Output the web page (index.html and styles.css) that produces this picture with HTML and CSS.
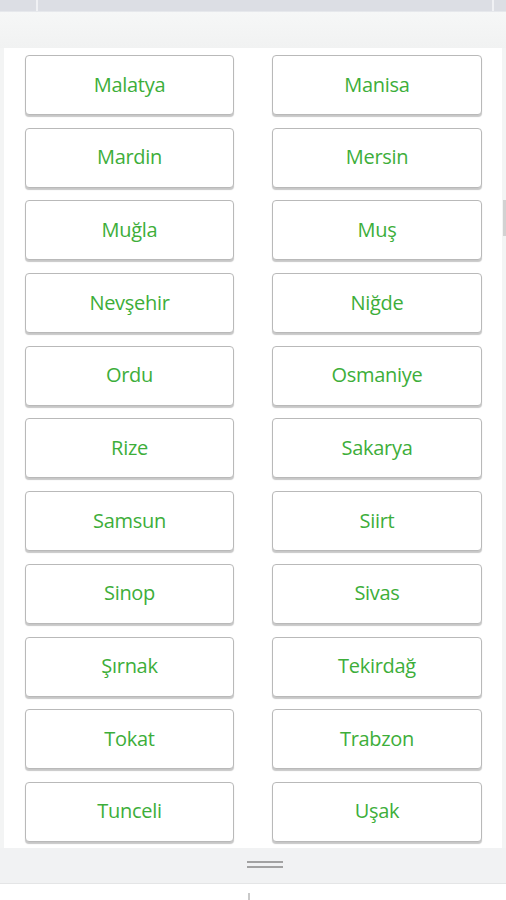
FILE: index.html
```html
<!DOCTYPE html>
<html lang="tr">
<head>
<meta charset="utf-8">
<title>İller</title>
<link rel="stylesheet" href="styles.css">
</head>
<body>
<div class="topbar"><div class="seg seg-a"></div><div class="seg seg-b"></div><div class="seg seg-c"></div></div>
<div class="spacer"></div>
<div class="panel">
  <div class="grid">
    <button class="city">Malatya</button><button class="city">Manisa</button>
    <button class="city">Mardin</button><button class="city">Mersin</button>
    <button class="city">Muğla</button><button class="city">Muş</button>
    <button class="city">Nevşehir</button><button class="city">Niğde</button>
    <button class="city">Ordu</button><button class="city">Osmaniye</button>
    <button class="city">Rize</button><button class="city">Sakarya</button>
    <button class="city">Samsun</button><button class="city">Siirt</button>
    <button class="city">Sinop</button><button class="city">Sivas</button>
    <button class="city">Şırnak</button><button class="city">Tekirdağ</button>
    <button class="city">Tokat</button><button class="city">Trabzon</button>
    <button class="city">Tunceli</button><button class="city">Uşak</button>
  </div>
</div>
<div class="handlebar"><span class="handle"></span></div>
<div class="footer"><span class="tick"></span></div>
<div class="scrollthumb"></div>
</body>
</html>
```
FILE: styles.css
```css
html, body {
  margin: 0;
  padding: 0;
}
body {
  width: 506px;
  height: 900px;
  overflow: hidden;
  background: #f3f4f4;
  font-family: "Open Sans", "DejaVu Sans", sans-serif;
  position: relative;
}
.topbar {
  height: 11px;
  display: flex;
  background: #dcdee4;
  border-bottom: 1px solid #e6e8ec;
}
.seg { height: 100%; }
.seg-a { width: 36px; border-right: 2px solid #f0f1f4; }
.seg-b { flex: 1; border-right: 2px solid #f0f1f4; }
.seg-c { width: 12px; }
.spacer {
  height: 36px;
  background: linear-gradient(#f6f7f7, #f1f2f2);
}
.panel {
  margin: 0 4px;
  background: #ffffff;
  padding: 7px 20px 6px 21px;
}
.grid {
  display: grid;
  grid-template-columns: 209px 210px;
  column-gap: 38px;
  row-gap: 12.7px;
}
.city {
  height: 60px;
  margin: 0;
  padding: 0;
  background: #ffffff;
  border: 1px solid #b9b9b9;
  border-radius: 4px;
  box-shadow: 0 2px 1px rgba(0,0,0,0.22);
  color: #3dae3a;
  font-family: "Open Sans", "DejaVu Sans", sans-serif;
  font-size: 20px;
  letter-spacing: -0.3px;
  display: flex;
  align-items: center;
  justify-content: center;
  padding-bottom: 2px;
}
.handlebar {
  height: 35px;
  background: #f1f2f3;
  border-bottom: 1px solid #e4e5e6;
  display: flex;
  align-items: center;
  justify-content: center;
}
.handle {
  width: 36px;
  height: 7px;
  margin-left: 24px;
  border-top: 2px solid #a2a2a2;
  border-bottom: 2px solid #a2a2a2;
  box-sizing: border-box;
  margin-top: -2px;
}
.footer {
  height: 16px;
  background: #ffffff;
  display: flex;
  justify-content: center;
  align-items: flex-end;
}
.tick {
  width: 2px;
  height: 7px;
  background: #c9c9c9;
  margin-right: 9px;
}
.scrollthumb {
  position: absolute;
  left: 503px;
  top: 200px;
  width: 3px;
  height: 36px;
  background: #d2d2d2;
}
```
